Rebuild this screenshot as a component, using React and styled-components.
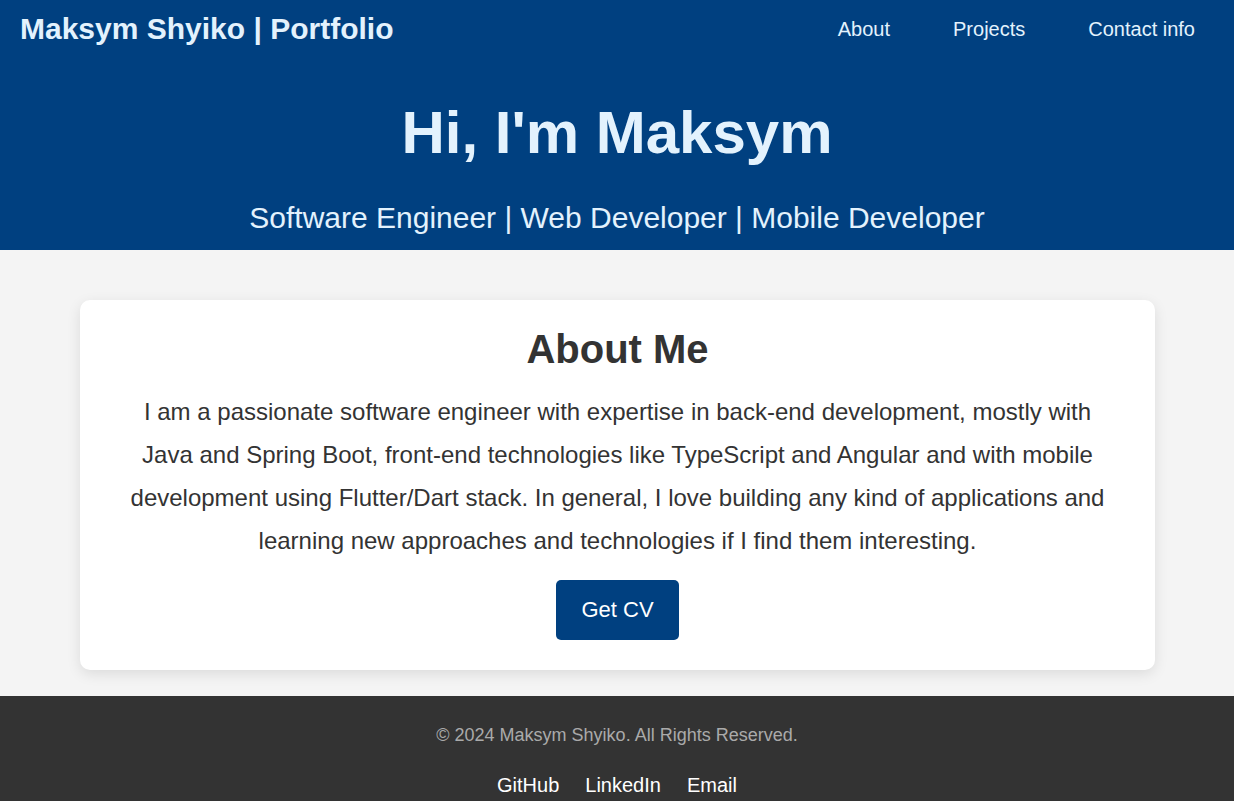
import React from "react";
import styled, { createGlobalStyle } from "styled-components";

const GlobalStyle = createGlobalStyle`
  body {
    margin: 0;
    font-family: "Liberation Sans", Arial, sans-serif;
    background: #f4f4f4;
    color: #333;
  }
`;

const Header = styled.header`
  background: #004080;
  color: #e3f2fd;
  height: 250px;
  overflow: hidden;
`;

const Nav = styled.nav`
  display: flex;
  align-items: center;
  justify-content: space-between;
  height: 57px;
  padding: 0 39px 0 20px;
`;

const Logo = styled.div`
  font-size: 30px;
  font-weight: bold;
`;

const NavLinks = styled.ul`
  display: flex;
  list-style: none;
  gap: 63px;
  margin: 1px 0 0;
  padding: 0;
`;

const NavLink = styled.a`
  color: #e3f2fd;
  text-decoration: none;
  font-size: 20px;
`;

const Hero = styled.section`
  text-align: center;
  padding-top: 41px;
`;

const Title = styled.h1`
  font-size: 60px;
  margin: 0;
  line-height: 70px;
`;

const Subtitle = styled.p`
  font-size: 30px;
  margin: 33px 0 0;
`;

const Main = styled.main`
  padding: 50px 79px 26px 80px;
`;

const Card = styled.section`
  background: #fff;
  border-radius: 10px;
  box-shadow: 0 4px 14px rgba(0, 0, 0, 0.1);
  padding: 26px 40px 30px;
  text-align: center;
`;

const CardTitle = styled.h2`
  font-size: 40px;
  margin: 0 0 18px;
  line-height: 46px;
`;

const Text = styled.p`
  font-size: 24px;
  line-height: 43px;
  margin: 0 0 18px;
`;

const Button = styled.a`
  display: inline-block;
  background: #004080;
  color: #fff;
  font-size: 22px;
  line-height: 26px;
  padding: 17px 25px;
  border-radius: 5px;
  text-decoration: none;
`;

const Footer = styled.footer`
  background: #333;
  text-align: center;
  padding: 29px 0 40px;
`;

const Copy = styled.p`
  color: #aaa;
  font-size: 18px;
  margin: 0 0 28px;
`;

const FooterLinks = styled.div`
  display: flex;
  justify-content: center;
  gap: 26px;
`;

const FooterLink = styled.a`
  color: #fff;
  font-size: 20px;
  text-decoration: none;
`;

export default function App() {
  return (
    <>
      <GlobalStyle />
      <Header>
        <Nav>
          <Logo>Maksym Shyiko | Portfolio</Logo>
          <NavLinks>
            <li><NavLink href="#about">About</NavLink></li>
            <li><NavLink href="#projects">Projects</NavLink></li>
            <li><NavLink href="#contact">Contact info</NavLink></li>
          </NavLinks>
        </Nav>
        <Hero>
          <Title>Hi, I'm Maksym</Title>
          <Subtitle>Software Engineer | Web Developer | Mobile Developer</Subtitle>
        </Hero>
      </Header>
      <Main>
        <Card id="about">
          <CardTitle>About Me</CardTitle>
          <Text>
            I am a passionate software engineer with expertise in back-end development, mostly with
            Java and Spring Boot, front-end technologies like TypeScript and Angular and with mobile
            development using Flutter/Dart stack. In general, I love building any kind of applications and
            learning new approaches and technologies if I find them interesting.
          </Text>
          <Button href="#cv">Get CV</Button>
        </Card>
      </Main>
      <Footer>
        <Copy>© 2024 Maksym Shyiko. All Rights Reserved.</Copy>
        <FooterLinks>
          <FooterLink href="#github">GitHub</FooterLink>
          <FooterLink href="#linkedin">LinkedIn</FooterLink>
          <FooterLink href="#email">Email</FooterLink>
        </FooterLinks>
      </Footer>
    </>
  );
}
